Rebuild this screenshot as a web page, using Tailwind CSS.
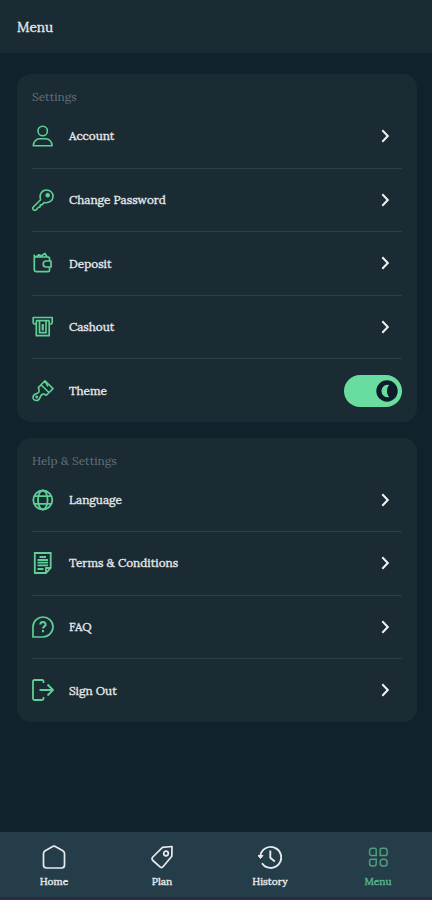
<!DOCTYPE html>
<html lang="en">
<head>
<meta charset="utf-8">
<title>Menu</title>
<script src="https://cdn.jsdelivr.net/npm/@tailwindcss/browser@4"></script>
</head>
<body class="bg-[#10222b] font-['Lora','Liberation_Serif',serif] text-[#e4e8ea]">
<div class="flex h-[900px] w-[432px] flex-col overflow-hidden">
  <header class="flex h-[53px] shrink-0 items-center bg-[#1a2b34] pl-[17px] text-[13.6px] leading-5 [-webkit-text-stroke:0.35px_currentColor]">Menu</header>
  <main class="flex grow flex-col gap-4 pl-[17px] pr-[15px] pt-[21px]">
    <section class="h-[348px] rounded-[14px] bg-[#1a2b34] pl-[15px] pr-[15px] pt-[15px]">
      <h2 class="h-[16px] text-[11.8px] leading-[15px] text-[#64717a]">Settings</h2>
      <div class="flex h-[63.6px] items-center border-b-[1.5px] border-[#2b3e47]">
        <svg class="size-[22px] shrink-0" viewBox="0 0 22 22" fill="none" stroke="#5fd095" stroke-width="1.6" stroke-linejoin="round"><circle cx="10.7" cy="6" r="4.7"/><path d="M1.3 20.8c0-4.2 3-7 6.4-7h6c3.5 0 6.4 2.800 6.400 7z"/></svg>
        <span class="ml-[15px] grow text-[11.8px] [-webkit-text-stroke:0.35px_currentColor]">Account</span>
        <svg class="mr-[9px] h-4 w-4" viewBox="0 0 16 16" fill="none" stroke="#f2f4f5" stroke-width="2"><path d="m5.300 2.300 5.500 5.700-5.500 5.700"/></svg>
      </div>
      <div class="flex h-[63.6px] items-center border-b-[1.5px] border-[#2b3e47]">
        <svg class="size-[22px] shrink-0" viewBox="0 0 22 22" fill="none" stroke="#5fd095" stroke-width="1.6" stroke-linejoin="round"><path d="M8.600 10.800C7 5.500 9.800 1 14.500 1c3.700 0 6.500 2.600 6.500 6.300 0 4.500-4 7.200-8.800 6.200l-2 2.100-1.900.300-.300 2-1.800.5-1.700 2.200C3 22 .8 21.300.8 19.300v-.8z"/><circle cx="15.700" cy="6.300" r="1.500" fill="#5fd095"/></svg>
        <span class="ml-[15px] grow text-[11.8px] [-webkit-text-stroke:0.35px_currentColor]">Change Password</span>
        <svg class="mr-[9px] h-4 w-4" viewBox="0 0 16 16" fill="none" stroke="#f2f4f5" stroke-width="2"><path d="m5.300 2.300 5.500 5.700-5.500 5.700"/></svg>
      </div>
      <div class="flex h-[63.6px] items-center border-b-[1.5px] border-[#2b3e47]">
        <svg class="size-[22px] shrink-0" viewBox="0 0 22 22" fill="none" stroke="#5fd095" stroke-width="1.7" stroke-linejoin="round"><path d="M17.500 9V6.300c0-.8-.5-1.300-1.300-1.300H4.300C2.500 5 2 4 2.300 3.200V17.500c0 1.400.8 2.200 2.200 2.200h11.500c1 0 1.500-.5 1.500-1.500v-3M4 5l3-2.200 2 1.200 4-2.500L15 5M19 9h-4.800a3 3 0 0 0 0 6H19z"/></svg>
        <span class="ml-[15px] grow text-[11.8px] [-webkit-text-stroke:0.35px_currentColor]">Deposit</span>
        <svg class="mr-[9px] h-4 w-4" viewBox="0 0 16 16" fill="none" stroke="#f2f4f5" stroke-width="2"><path d="m5.300 2.300 5.500 5.700-5.500 5.700"/></svg>
      </div>
      <div class="flex h-[63.6px] items-center border-b-[1.5px] border-[#2b3e47]">
        <svg class="size-[22px] shrink-0" viewBox="0 0 22 22" fill="none" stroke="#5fd095" stroke-width="1.7" stroke-linejoin="round"><path d="M4 8H2.200L1.200 7V1.500h19V7l-1 1h-1.700M4 4.700h13.500M4.300 4.700v15h12.900v-15M7.500 5v11.700h6.500V5"/><path d="M10.750 8v6.500" stroke-width="2.200"/></svg>
        <span class="ml-[15px] grow text-[11.8px] [-webkit-text-stroke:0.35px_currentColor]">Cashout</span>
        <svg class="mr-[9px] h-4 w-4" viewBox="0 0 16 16" fill="none" stroke="#f2f4f5" stroke-width="2"><path d="m5.300 2.300 5.500 5.700-5.500 5.700"/></svg>
      </div>
      <div class="flex h-[62.4px] items-center">
        <svg class="size-[22px] shrink-0" viewBox="0 0 22 22" fill="none" stroke="#5fd095" stroke-width="1.6" stroke-linejoin="round"><path d="m13 .8 8 7.800-6.700 6.700c-1.800-1.200-3.700-1.500-4.800-.4-1.900 1.900-1.300 5.600-5 5.600-2 0-3.500-1.300-3.500-3.300 0-3.900 4-2.900 5.700-5 1-1.200.3-2.700-.4-4.600zM9 4.700l8.200 8M13 .8l2.800 5.700"/><circle cx="4.700" cy="17" r=".6"/></svg>
        <span class="ml-[15px] grow text-[11.8px] [-webkit-text-stroke:0.35px_currentColor]">Theme</span>
        <div class="flex h-8 w-[58px] items-center justify-end rounded-full bg-[#69dda0] pr-1">
          <svg class="size-[22px]" viewBox="0 0 22 22"><circle cx="11" cy="11" r="10.700" fill="#0c1c28"/><path d="M13.200 5a6.200 6.200 0 1 0 0 12c-3-3-3-9 0-12z" fill="#69dda0"/></svg>
        </div>
      </div>
    </section>
    <section class="h-[284px] rounded-[14px] bg-[#1a2b34] pl-[15px] pr-[15px] pt-[15px]">
      <h2 class="h-[15.4px] text-[11.8px] leading-[15px] text-[#64717a]">Help &amp; Settings</h2>
      <div class="flex h-[63.6px] items-center border-b-[1.5px] border-[#2b3e47]">
        <svg class="size-[22px] shrink-0" viewBox="0 0 22 22" fill="none" stroke="#5fd095" stroke-width="1.8"><circle cx="10.800" cy="11" r="9.500"/><ellipse cx="10.800" cy="11" rx="4.800" ry="9.500"/><path d="M2.500 7.200h16.600M2.500 14.800h16.600"/></svg>
        <span class="ml-[15px] grow text-[11.8px] [-webkit-text-stroke:0.35px_currentColor]">Language</span>
        <svg class="mr-[9px] h-4 w-4" viewBox="0 0 16 16" fill="none" stroke="#f2f4f5" stroke-width="2"><path d="m5.300 2.300 5.500 5.700-5.500 5.700"/></svg>
      </div>
      <div class="flex h-[63.6px] items-center border-b-[1.5px] border-[#2b3e47]">
        <svg class="size-[22px] shrink-0" viewBox="0 0 22 22" fill="none" stroke="#5fd095" stroke-width="1.800"><path d="M2.800 1h15.900v15L14 21H2.800zM14 21v-5h4.700M7.500 5h6.500M5.500 8h10.500M5.500 10.700h10.500M5.500 13.400h10.500M5.500 17h6"/></svg>
        <span class="ml-[15px] grow text-[11.8px] [-webkit-text-stroke:0.35px_currentColor]">Terms &amp; Conditions</span>
        <svg class="mr-[9px] h-4 w-4" viewBox="0 0 16 16" fill="none" stroke="#f2f4f5" stroke-width="2"><path d="m5.300 2.300 5.500 5.700-5.500 5.700"/></svg>
      </div>
      <div class="flex h-[63.6px] items-center border-b-[1.5px] border-[#2b3e47]">
        <svg class="size-[22px] shrink-0" viewBox="0 0 22 22" fill="none" stroke="#5fd095" stroke-width="1.700"><path d="M1 21V10.800C1 5.200 5.500 1 11 1s10 4.300 10 9.800S16.500 21 11 21z"/><path d="M8.300 8.600c0-3.400 5.300-3.400 5.300-.2 0 2-2.600 2-2.600 4.200M11 14v2.200" stroke-width="2"/></svg>
        <span class="ml-[15px] grow text-[11.8px] [-webkit-text-stroke:0.35px_currentColor]">FAQ</span>
        <svg class="mr-[9px] h-4 w-4" viewBox="0 0 16 16" fill="none" stroke="#f2f4f5" stroke-width="2"><path d="m5.300 2.300 5.500 5.700-5.500 5.700"/></svg>
      </div>
      <div class="flex h-[62.4px] items-center">
        <svg class="size-[22px] shrink-0" viewBox="0 0 22 22" fill="none" stroke="#5fd095" stroke-width="1.800" stroke-linejoin="round"><path d="M11.500 4V2.500Q11.500 1 10 1H2.500Q1 1 1 2.500v17Q1 21 2.500 21H10q1.500 0 1.500-1.500V18M7.500 11h13M15.500 5.500 21 11l-5.500 5.500"/></svg>
        <span class="ml-[15px] grow text-[11.8px] [-webkit-text-stroke:0.35px_currentColor]">Sign Out</span>
        <svg class="mr-[9px] h-4 w-4" viewBox="0 0 16 16" fill="none" stroke="#f2f4f5" stroke-width="2"><path d="m5.300 2.300 5.500 5.700-5.500 5.700"/></svg>
      </div>
    </section>
  </main>
  <nav class="grid h-[68px] shrink-0 grid-cols-4 border-b-[3px] border-[#292b45] bg-[#243d48] pt-[13px] text-[10.2px] leading-[14px] [-webkit-text-stroke:0.4px_currentColor]">
    <div class="flex flex-col items-center gap-1.5">
      <svg class="size-6" viewBox="0 0 24 24" fill="none" stroke="#e8eaed" stroke-width="1.700" stroke-linejoin="round"><path d="M1.500 8.500c0-1.500.4-2 1.700-2.800l7-4c1.300-.8 2.300-.8 3.600 0l7 4c1.300.8 1.700 1.300 1.700 2.800V20c0 2-1 3-3 3h-15c-2 0-3-1-3-3z"/></svg>
      <span>Home</span>
    </div>
    <div class="flex flex-col items-center gap-1.5">
      <svg class="size-6" viewBox="0 0 24 24" fill="none" stroke="#e8eaed" stroke-width="1.700" stroke-linejoin="round"><path d="M12.500 2.300 22 1.500l-.2 9.700-8.600 10.300c-1.100 1.300-2.300 1.400-3.500.2L2.900 15.500c-1.200-1.200-1.200-2.300-.1-3.500z"/><circle cx="16" cy="8.500" r="2.300"/></svg>
      <span>Plan</span>
    </div>
    <div class="flex flex-col items-center gap-1.5">
      <svg class="size-6" viewBox="0 0 24 24" fill="none" stroke="#e8eaed" stroke-width="1.900"><path d="M2.300 11A10.500 10.500 0 1 1 4 18.300M12.300 5.500v7.200l4.500 3.800"/><path d="M0 10.500h5l-2.500 3z" fill="#e8eaed" stroke-width="1"/></svg>
      <span>History</span>
    </div>
    <div class="flex flex-col items-center gap-1.5 text-[#56b98b]">
      <svg class="size-6" viewBox="0 0 24 24" fill="none" stroke="#4f9e80" stroke-width="1.500"><path d="M6.200 3.200h2.200c1.200 0 1.800.6 1.800 1.800v5.500H5.400c-1.200 0-1.800-.6-1.800-1.800V5.800c0-1.700.9-2.600 2.600-2.600zM16 3.200h2.500c1.700 0 2.600.9 2.600 2.600v2.900c0 1.200-.6 1.800-1.800 1.800h-5.100V5c0-1.200.6-1.800 1.800-1.800zM5.400 14.200h4.800v4.400c0 1.600-.9 2.500-2.500 2.500H6.100c-1.600 0-2.500-.9-2.500-2.500V16c0-1.200.6-1.800 1.800-1.800z"/><rect x="14.200" y="14.200" width="6.900" height="6.900" rx="2.800"/></svg>
      <span>Menu</span>
    </div>
  </nav>
</div>
</body>
</html>
